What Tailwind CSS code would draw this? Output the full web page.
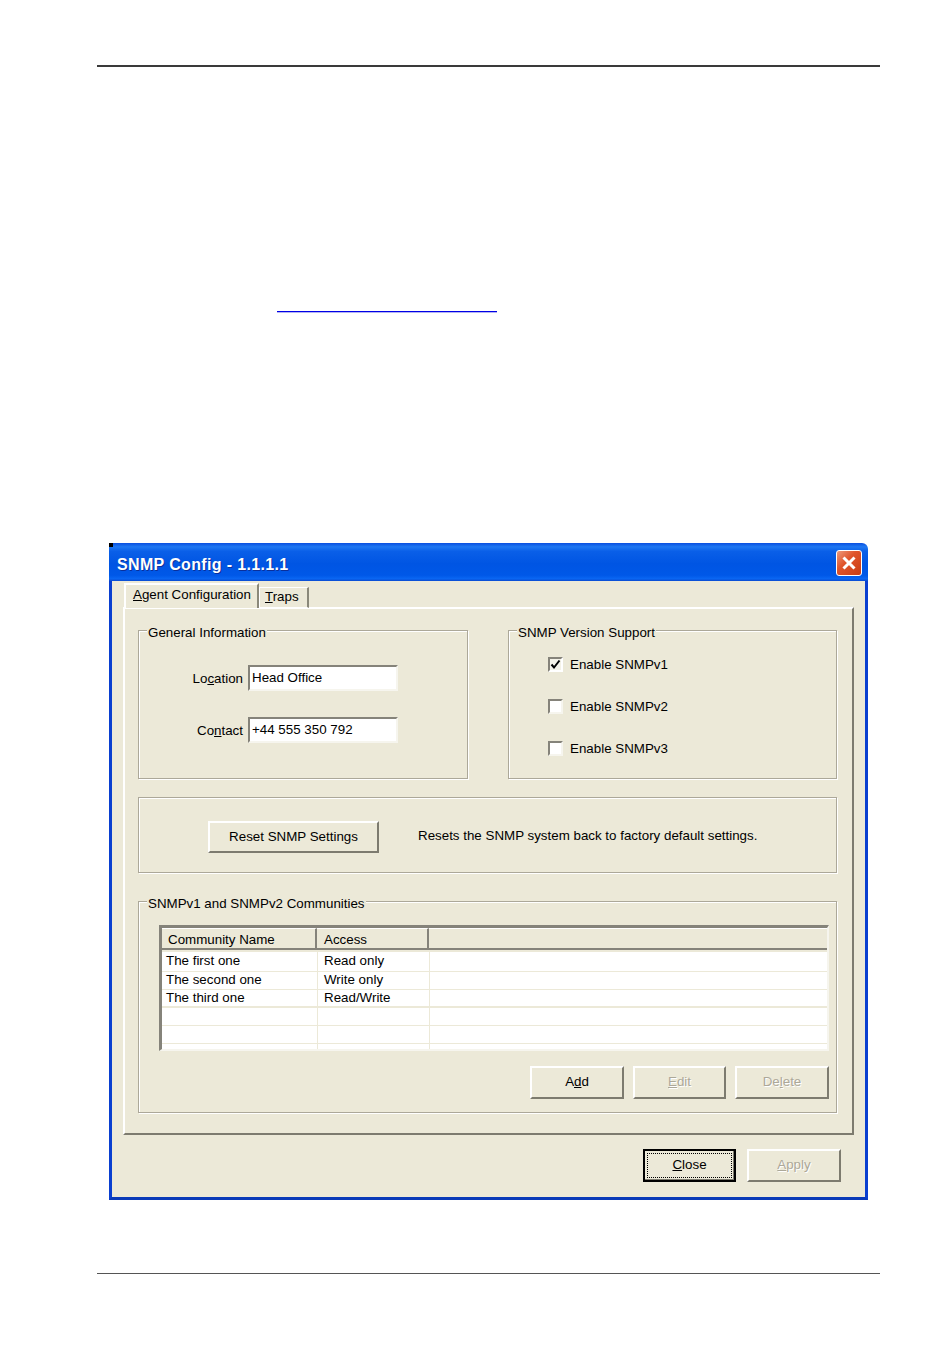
<!DOCTYPE html>
<html lang="en">
<head>
    <meta charset="UTF-8">
    <meta name="viewport" content="width=device-width, initial-scale=1.0">
    <title>SNMP Config</title>
    <script src="https://cdn.jsdelivr.net/npm/@tailwindcss/browser@4"></script>
</head>
<body class="bg-white font-['Liberation_Sans',Arial,sans-serif] text-[13.35px] leading-[16px] text-black">
<div class="w-[950px] h-[1360px] overflow-hidden pt-[65px]">
    <!-- page header rule -->
    <div class="ml-[97px] w-[783px] h-[2px] bg-[#3a3a3a]"></div>

    <!-- link underline left over from the page text -->
    <div class="ml-[277px] mt-[244px] w-[220px] h-[1px] bg-[#0000e6] shadow-[0_1px_0_#b4b4f4]"></div>

    <!-- window -->
    <div class="relative ml-[109px] mt-[231px] w-[759px] h-[657px] flex flex-col rounded-tr-[6px] overflow-hidden">
        <div class="absolute top-0 left-0 w-[4px] h-[4px] bg-black"></div>

        <!-- title bar -->
        <div class="h-[38px] shrink-0 flex items-center justify-between pl-[8px] pr-[6px] bg-[linear-gradient(180deg,#0a4fe0_0%,#1f78f2_10%,#0a5fe8_22%,#0055e3_55%,#0058e8_85%,#0a66f2_94%,#0a4ad0_100%)]">
            <span class="mt-[6px] font-bold text-[16px] tracking-[0.35px] text-white [text-shadow:1px_1px_0_#0a2f9a]">SNMP Config - 1.1.1.1</span>
            <span class="mt-[2px] w-[26px] h-[26px] rounded-[3px] border border-white flex items-center justify-center bg-[linear-gradient(135deg,#ee9a7c_0%,#e0552c_40%,#c93d14_100%)]">
                <svg width="16" height="16" viewBox="0 0 16 16"><path d="M2.5 2.5L13.5 13.5M13.5 2.5L2.5 13.5" stroke="#fff" stroke-width="3" fill="none"/></svg>
            </span>
        </div>

        <!-- window body -->
        <div class="flex-1 flex flex-col bg-[#ECE9D8] border-x-[3px] border-b-[3px] border-l-[#0a3fd0] border-r-[#0a3fd0] border-b-[#0a3ab8] pl-[11px] pt-[2px]">
            <!-- tabs -->
            <div class="flex items-end h-[25px] ml-[1px] relative z-10 -mb-[1px]">
                <div class="w-[135px] h-[25px] bg-[#ECE9D8] border-l-2 border-t-2 border-r-2 border-l-white border-t-white border-r-[#8a887a] pl-[7px] pt-[2px]"><u>A</u>gent Configuration</div>
                <div class="w-[50px] h-[21px] bg-[#ECE9D8] border-l border-t border-r-2 border-l-white border-t-white border-r-[#8a887a] border-b border-b-white pl-[5px] pt-[1px]"><u>T</u>raps</div>
            </div>

            <!-- tab panel -->
            <div class="w-[731px] h-[528px] border-2 border-t-white border-l-white border-r-[#7d7b6f] border-b-[#7d7b6f] pl-[13px] pt-[21px]">
                <div class="flex gap-[40px]">
                    <!-- general information -->
                    <div class="relative w-[330px] h-[149px] border border-[#aca899] shadow-[1px_1px_0_#fff,inset_1px_1px_0_#fff] pt-[34px]">
                        <span class="absolute -top-[6px] left-[8px] px-[1px] bg-[#ECE9D8]">General Information</span>
                        <div class="flex flex-col gap-[26px]">
                            <div class="flex items-center justify-end w-[259px] gap-[5px]">
                                <span class="mt-[2px]">Lo<u>c</u>ation</span>
                                <div class="w-[150px] h-[26px] bg-white border-2 border-t-[#85837a] border-l-[#85837a] border-r-[#f6f5ee] border-b-[#f6f5ee] pl-[2px] pt-[3px]">Head Office</div>
                            </div>
                            <div class="flex items-center justify-end w-[259px] gap-[5px]">
                                <span class="mt-[2px]">Co<u>n</u>tact</span>
                                <div class="w-[150px] h-[26px] bg-white border-2 border-t-[#85837a] border-l-[#85837a] border-r-[#f6f5ee] border-b-[#f6f5ee] pl-[2px] pt-[3px]">+44 555 350 792</div>
                            </div>
                        </div>
                    </div>

                    <!-- version support -->
                    <div class="relative w-[329px] h-[149px] border border-[#aca899] shadow-[1px_1px_0_#fff,inset_1px_1px_0_#fff] pt-[25px] pl-[39px]">
                        <span class="absolute -top-[6px] left-[8px] px-[1px] bg-[#ECE9D8]">SNMP Version Support</span>
                        <div class="flex flex-col gap-[25px]">
                            <div class="flex items-center gap-[7px] h-[17px]">
                                <span class="w-[15px] h-[15px] bg-[#f4f2e8] border-2 border-t-[#85837a] border-l-[#85837a] border-r-white border-b-white flex items-center justify-center">
                                    <svg width="11" height="11" viewBox="0 0 11 11"><path d="M1.5 5.5L4 8.5L9.5 1.5" stroke="#000" stroke-width="2" fill="none"/></svg>
                                </span>
                                <span class="mt-[1px]">Enable SNMPv1</span>
                            </div>
                            <div class="flex items-center gap-[7px] h-[17px]">
                                <span class="w-[15px] h-[15px] bg-white border-2 border-t-[#85837a] border-l-[#85837a] border-r-[#f6f5ee] border-b-[#f6f5ee]"></span>
                                <span class="mt-[1px]">Enable SNMPv2</span>
                            </div>
                            <div class="flex items-center gap-[7px] h-[17px]">
                                <span class="w-[15px] h-[15px] bg-white border-2 border-t-[#85837a] border-l-[#85837a] border-r-[#f6f5ee] border-b-[#f6f5ee]"></span>
                                <span class="mt-[1px]">Enable SNMPv3</span>
                            </div>
                        </div>
                    </div>
                </div>

                <!-- reset -->
                <div class="mt-[18px] w-[699px] h-[76px] border border-[#aca899] shadow-[1px_1px_0_#fff,inset_1px_1px_0_#fff] flex items-center pl-[69px]">
                    <button class="mt-[4px] w-[171px] h-[32px] border-2 border-t-white border-l-white border-r-[#7d7b6f] border-b-[#7d7b6f]">Reset SNMP Settings</button>
                    <span class="ml-[39px] mt-[2px]">Resets the SNMP system back to factory default settings.</span>
                </div>

                <!-- communities -->
                <div class="relative mt-[28px] w-[699px] h-[212px] border border-[#aca899] shadow-[1px_1px_0_#fff,inset_1px_1px_0_#fff] pl-[20px] pt-[23px]">
                    <span class="absolute -top-[6px] left-[8px] px-[1px] bg-[#ECE9D8]">SNMPv1 and SNMPv2 Communities</span>

                    <div class="w-[670px] h-[126px] bg-white border-[3px] border-r-2 border-b-2 border-t-[#85837a] border-l-[#85837a] border-r-[#f6f5ee] border-b-[#f6f5ee] overflow-hidden">
                        <div class="flex h-[22px] bg-[#ECE9D8] border-b-2 border-b-[#85837a]">
                            <div class="w-[155px] border-r-2 border-r-[#85837a] pl-[6px] pt-[3px] border-t border-t-white">Community Name</div>
                            <div class="w-[112px] border-r-2 border-r-[#85837a] pl-[7px] pt-[3px] border-t border-t-white">Access</div>
                            <div class="flex-1 border-t border-t-white"></div>
                        </div>
                        <div class="flex h-[22px] border-t-2 border-t-[#ECE9D8] border-b border-b-[#ECE9D8]">
                            <div class="w-[156px] border-r border-r-[#ECE9D8] pl-[4px] pt-[1px]">The first one</div>
                            <div class="w-[112px] border-r border-r-[#ECE9D8] pl-[6px] pt-[1px]">Read only</div>
                        </div>
                        <div class="flex h-[18px] border-b border-b-[#ECE9D8]">
                            <div class="w-[156px] border-r border-r-[#ECE9D8] pl-[4px]">The second one</div>
                            <div class="w-[112px] border-r border-r-[#ECE9D8] pl-[6px]">Write only</div>
                        </div>
                        <div class="flex h-[18px] border-b-2 border-b-[#ECE9D8]">
                            <div class="w-[156px] border-r border-r-[#ECE9D8] pl-[4px]">The third one</div>
                            <div class="w-[112px] border-r border-r-[#ECE9D8] pl-[6px]">Read/Write</div>
                        </div>
                        <div class="flex h-[18px] border-b border-b-[#ECE9D8]">
                            <div class="w-[156px] border-r border-r-[#ECE9D8]"></div>
                            <div class="w-[112px] border-r border-r-[#ECE9D8]"></div>
                        </div>
                        <div class="flex h-[18px] border-b border-b-[#ECE9D8]">
                            <div class="w-[156px] border-r border-r-[#ECE9D8]"></div>
                            <div class="w-[112px] border-r border-r-[#ECE9D8]"></div>
                        </div>
                        <div class="flex h-[6px]">
                            <div class="w-[156px] border-r border-r-[#ECE9D8]"></div>
                            <div class="w-[112px] border-r border-r-[#ECE9D8]"></div>
                        </div>
                    </div>

                    <div class="flex justify-end gap-[9px] mt-[15px] pr-[7px]">
                        <button class="w-[94px] h-[33px] pb-[1px] border-2 border-t-white border-l-white border-r-[#7d7b6f] border-b-[#7d7b6f]">A<u>d</u>d</button>
                        <button disabled class="w-[93px] h-[33px] pb-[1px] border-2 border-t-white border-l-white border-r-[#7d7b6f] border-b-[#7d7b6f] text-[#aca899] [text-shadow:1px_1px_0_#fff]"><u>E</u>dit</button>
                        <button disabled class="w-[94px] h-[33px] pb-[1px] border-2 border-t-white border-l-white border-r-[#7d7b6f] border-b-[#7d7b6f] text-[#aca899] [text-shadow:1px_1px_0_#fff]">De<u>l</u>ete</button>
                    </div>
                </div>
            </div>

            <!-- bottom buttons -->
            <div class="flex justify-end gap-[11px] mt-[14px] pr-[24px]">
                <button class="w-[93px] h-[33px] border-2 border-black shadow-[inset_-1px_-1px_0_#7d7b6f] p-[2px]">
                    <span class="block h-full border border-dotted border-black leading-[21px]"><u>C</u>lose</span>
                </button>
                <button disabled class="w-[94px] h-[33px] pb-[1px] border-2 border-t-white border-l-white border-r-[#7d7b6f] border-b-[#7d7b6f] text-[#aca899] [text-shadow:1px_1px_0_#fff]"><u>A</u>pply</button>
            </div>
        </div>
    </div>

    <!-- page footer rule -->
    <div class="ml-[97px] mt-[73px] w-[783px] h-[1px] bg-[#555]"></div>
</div>
</body>
</html>
